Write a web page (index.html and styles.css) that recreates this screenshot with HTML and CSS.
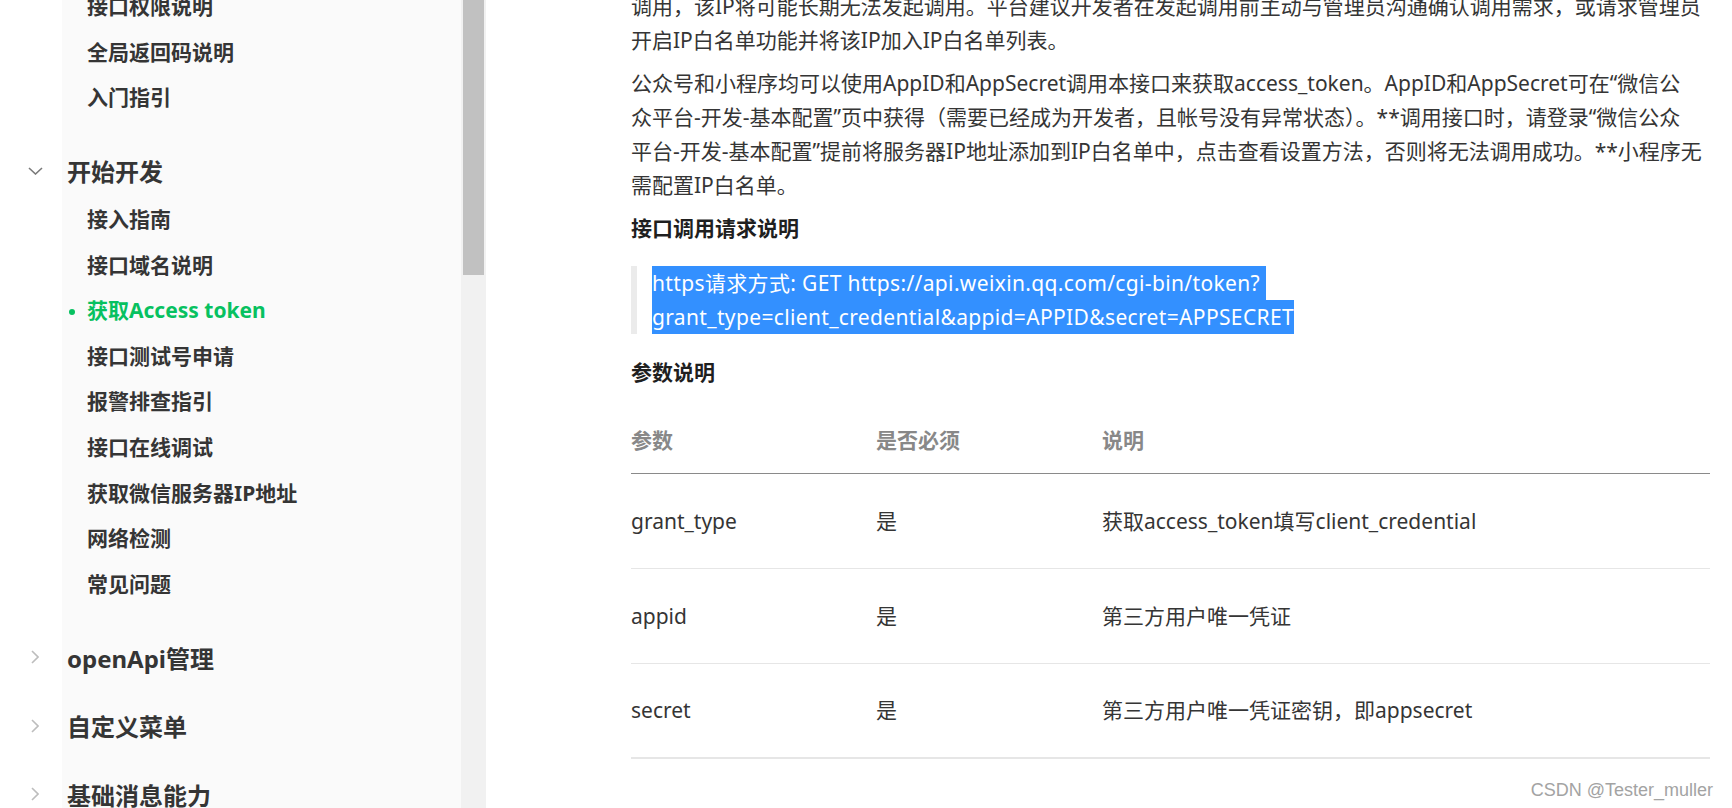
FILE: index.html
```html
<!DOCTYPE html>
<html lang="zh-CN">
<head>
<meta charset="utf-8">
<title>获取Access token</title>
<link rel="stylesheet" href="styles.css">
</head>
<body>
<div class="page">
  <aside class="sidebar">
    <nav class="nav">
      <div class="group open first">
        <ul class="children">
          <li class="sub">接口权限说明</li>
          <li class="sub">全局返回码说明</li>
          <li class="sub">入门指引</li>
        </ul>
      </div>
      <div class="group open">
        <div class="head">
          <span class="chev-cell"><svg class="chev-down" width="15" height="8" viewBox="0 0 15 8"><path d="M1 1 L7.5 7 L14 1" fill="none" stroke="#7a7a7a" stroke-width="1.6"/></svg></span>
          <span class="head-text">开始开发</span>
        </div>
        <ul class="children">
          <li class="sub">接入指南</li>
          <li class="sub">接口域名说明</li>
          <li class="sub active">获取Access token</li>
          <li class="sub">接口测试号申请</li>
          <li class="sub">报警排查指引</li>
          <li class="sub">接口在线调试</li>
          <li class="sub">获取微信服务器IP地址</li>
          <li class="sub">网络检测</li>
          <li class="sub">常见问题</li>
        </ul>
      </div>
      <div class="group">
        <div class="head">
          <span class="chev-cell"><svg class="chev-right" width="8" height="14" viewBox="0 0 8 14"><path d="M1 1 L7 7 L1 13" fill="none" stroke="#bdbdbd" stroke-width="1.6"/></svg></span>
          <span class="head-text">openApi管理</span>
        </div>
      </div>
      <div class="group">
        <div class="head">
          <span class="chev-cell"><svg class="chev-right" width="8" height="14" viewBox="0 0 8 14"><path d="M1 1 L7 7 L1 13" fill="none" stroke="#bdbdbd" stroke-width="1.6"/></svg></span>
          <span class="head-text">自定义菜单</span>
        </div>
      </div>
      <div class="group">
        <div class="head">
          <span class="chev-cell"><svg class="chev-right" width="8" height="14" viewBox="0 0 8 14"><path d="M1 1 L7 7 L1 13" fill="none" stroke="#bdbdbd" stroke-width="1.6"/></svg></span>
          <span class="head-text">基础消息能力</span>
        </div>
      </div>
    </nav>
    <div class="scrollbar"><div class="thumb"></div></div>
  </aside>

  <main class="main">
    <p>调用，该IP将可能长期无法发起调用。平台建议开发者在发起调用前主动与管理员沟通确认调用需求，或请求管理员<br>开启IP白名单功能并将该IP加入IP白名单列表。</p>
    <p>公众号和小程序均可以使用AppID和AppSecret调用本接口来获取access_token。AppID和AppSecret可在“微信公<br>众平台-开发-基本配置”页中获得（需要已经成为开发者，且帐号没有异常状态）。**调用接口时，请登录“微信公众<br>平台-开发-基本配置”提前将服务器IP地址添加到IP白名单中，点击查看设置方法，否则将无法调用成功。**小程序无<br>需配置IP白名单。</p>
    <h4 class="sec">接口调用请求说明</h4>
    <blockquote class="quote">
      <span class="sel-line">https请求方式: GET https://api.weixin.qq.com/cgi-bin/token? </span>
      <span class="sel-line">grant_type=client_credential&amp;appid=APPID&amp;secret=APPSECRET</span>
    </blockquote>
    <h4 class="sec">参数说明</h4>
    <table class="params">
      <colgroup><col class="c1"><col class="c2"><col class="c3"></colgroup>
      <thead>
        <tr><th>参数</th><th>是否必须</th><th>说明</th></tr>
      </thead>
      <tbody>
        <tr><td>grant_type</td><td>是</td><td>获取access_token填写client_credential</td></tr>
        <tr><td>appid</td><td>是</td><td>第三方用户唯一凭证</td></tr>
        <tr class="last"><td>secret</td><td>是</td><td>第三方用户唯一凭证密钥，即appsecret</td></tr>
      </tbody>
    </table>
  </main>
  <div class="watermark">CSDN @Tester_muller</div>
</div>
</body>
</html>
```

FILE: styles.css
```css
* { box-sizing: border-box; }
html, body {
  margin: 0;
  padding: 0;
  height: 100%;
  overflow: hidden;
  background: #fff;
}
body {
  font-family: "Noto Sans", "Noto Sans CJK SC", sans-serif;
  color: #353535;
}
.page {
  display: flex;
  height: 808px;
  overflow: hidden;
  position: relative;
}

/* sidebar */
.sidebar {
  width: 486px;
  flex: none;
  display: flex;
  height: 100%;
  overflow: hidden;
}
.nav {
  width: 461px;
  height: 100%;
  background: linear-gradient(to right, #fff 62px, #fafafa 62px);
  overflow: hidden;
}
.group { padding-bottom: 16.5px; }
.group.first { margin-top: -15.8px; }
.group.open .children { padding-bottom: 7.5px; }
.children {
  list-style: none;
  margin: 0;
  padding: 0;
}
.sub {
  height: 45.6px;
  line-height: 45.6px;
  padding-left: 87px;
  font-size: 21px;
  font-weight: 700;
  color: #353535;
  white-space: nowrap;
  position: relative;
}
.sub.active { color: #07c160; }
.sub.active::before {
  content: "";
  position: absolute;
  left: 69px;
  top: 50%;
  width: 6px;
  height: 6px;
  margin-top: -2px;
  border-radius: 50%;
  background: #07c160;
}
.head {
  display: flex;
  align-items: center;
  height: 52px;
}
.chev-cell {
  width: 67px;
  flex: none;
  display: flex;
  align-items: center;
}
.chev-down { margin-left: 28px; }
.chev-right { margin-left: 31px; }
.head-text {
  font-size: 24px;
  font-weight: 700;
  color: #353535;
  white-space: nowrap;
}
.scrollbar {
  width: 25px;
  flex: none;
  height: 100%;
  background: #f1f1f1;
  padding: 0 2px;
}
.thumb {
  height: 275px;
  background: #c1c1c1;
}

/* main content */
.main {
  flex: 1;
  padding: 0 22px 0 145px;
  margin-top: -11px;
  font-size: 21px;
  line-height: 34px;
}
.main p {
  margin: 0 0 9px;
  white-space: nowrap;
}
.sec {
  margin: 0;
  font-size: 21px;
  line-height: 34px;
  font-weight: 700;
  color: #1f1f1f;
}
.quote {
  margin: 21px 0;
  padding-left: 15px;
  border-left: 6px solid #ebebeb;
  letter-spacing: 0.35px;
}
.sel-line {
  display: block;
  width: fit-content;
  background: #3390ff;
  color: #fff;
  white-space: pre;
}
.params {
  width: 100%;
  margin-top: 18px;
  border-collapse: collapse;
  font-size: 21px;
}
.params .c1 { width: 245px; }
.params .c2 { width: 226px; }
.params th {
  text-align: left;
  font-weight: 700;
  color: #888;
  height: 66px;
  padding: 0;
  border-bottom: 1px solid #8a8a8a;
}
.params td {
  height: 95px;
  padding: 0;
  border-bottom: 1px solid #e6e6e6;
  color: #353535;
}
.params tr.last td { border-bottom: 2px solid #e6e6e6; }

.watermark {
  position: absolute;
  right: 19px;
  top: 779px;
  font-family: "Liberation Sans", Arial, sans-serif;
  font-size: 18px;
  line-height: 22px;
  color: #a3a3a3;
}
```
